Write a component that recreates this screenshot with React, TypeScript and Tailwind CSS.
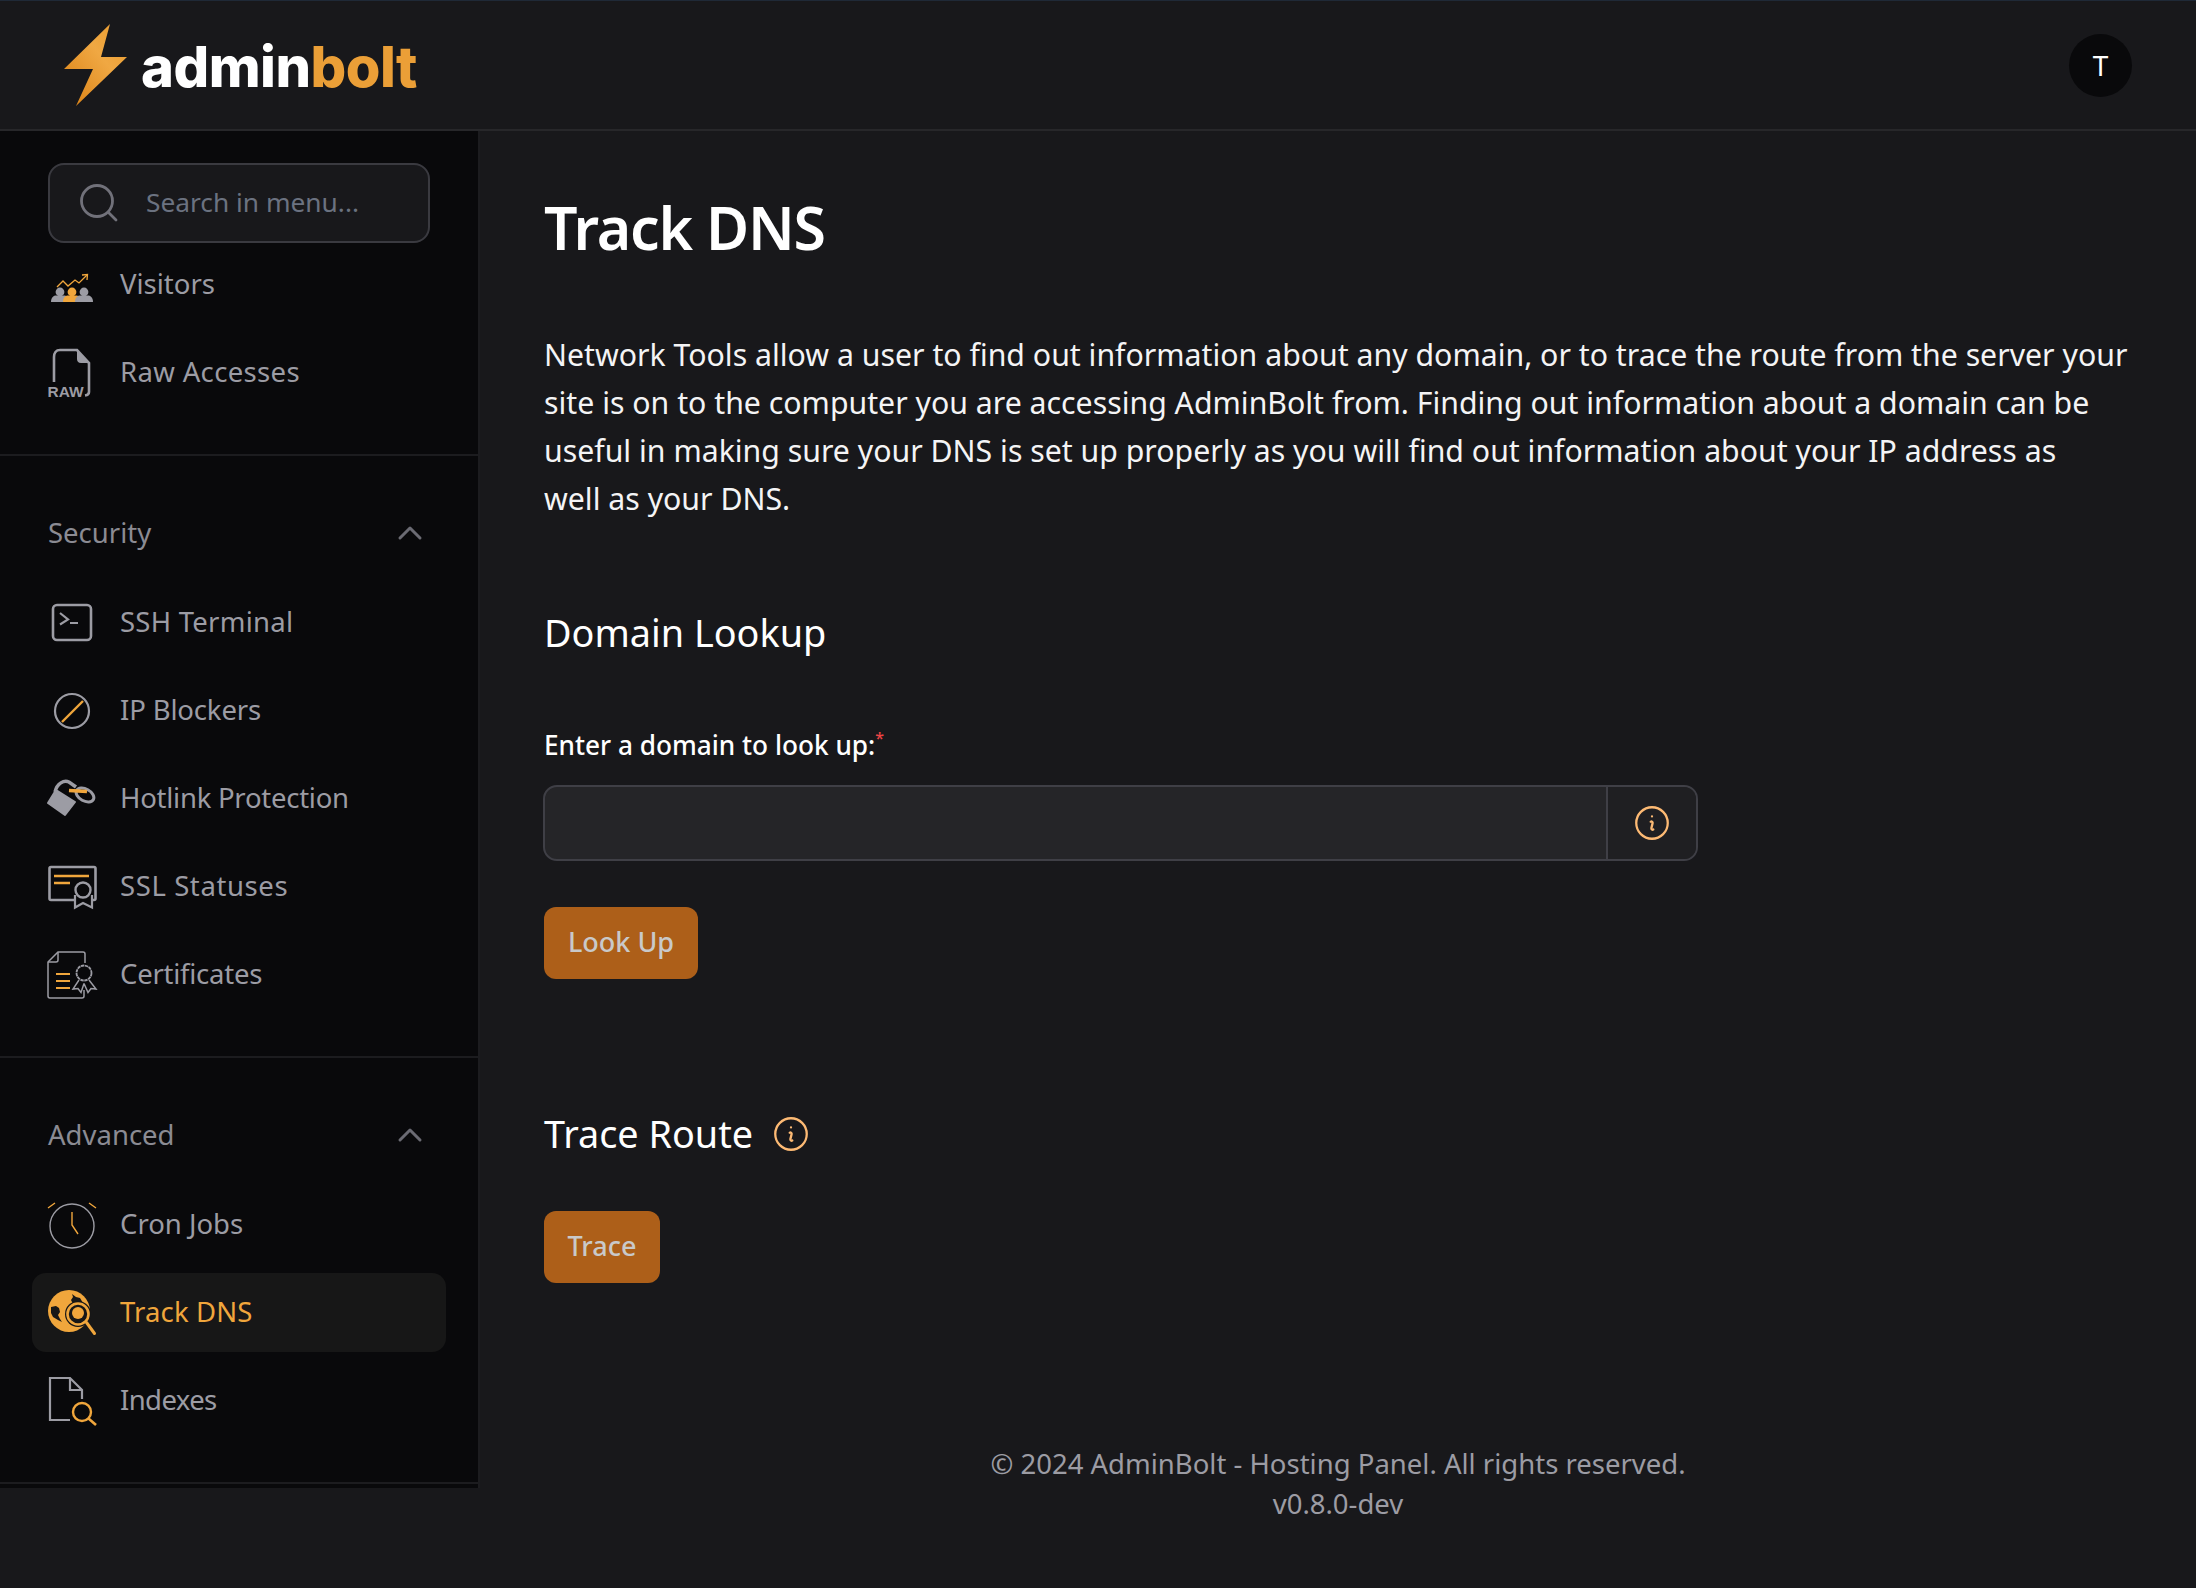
import React from "react";

const G = "#9c9ca4";
const O = "#f0a63c";

function Box({ children }: { children: React.ReactNode }) {
  return (
    <svg viewBox="0 0 48 48" className="w-12 h-12 shrink-0 overflow-visible mb-[3px]" fill="none">
      {children}
    </svg>
  );
}

const VisitorsIcon = () => (
  <Box>
    <polyline points="9,28 15,22 20,27 27,21 31,24 39,16" stroke={O} strokeWidth="1.3" />
    <polyline points="34,16 39.5,15.5 39,21" stroke={O} strokeWidth="1.3" />
    {[[12, G], [24, O], [36, G]].map(([x, c]) => (
      <g key={x as number} fill={c as string}>
        <circle cx={x as number} cy={33} r={4.4} />
        <path d={`M${(x as number) - 9} 43c0-5 3-6.500 5-6.500h8c2 0 5 1.500 5 6.500z`} />
      </g>
    ))}
  </Box>
);
const RawIcon = () => (
  <Box>
    <path d="M6 35V10c0-4 2-7 6-7h17l12 13v29c0 2-1 3-4 3.500" stroke={G} strokeWidth="2.6" />
    <path d="M29 3l12 13h-8c-3 0-4-2-4-4z" fill={G} />
    <text x="-0.500" y="50" fontFamily="Liberation Sans" fontWeight="700" fontSize="15.5" fill={G}>RAW</text>
  </Box>
);
const SshIcon = () => (
  <Box>
    <rect x="5" y="8" width="38" height="35" rx="4" stroke={G} strokeWidth="2.6" />
    <path d="M12 16l8 6.500-8 5M22 26h8" stroke={G} strokeWidth="2.2" />
  </Box>
);
const BlockIcon = () => (
  <Box>
    <circle cx="24" cy="26" r="17" stroke={G} strokeWidth="2.2" />
    <path d="M14 37L35 16" stroke={O} strokeWidth="2.4" />
  </Box>
);
const HotlinkIcon = () => (
  <Box>
    <path d="M0 30L8 17l19 12-10 13z" fill={G} strokeLinejoin="round" stroke={G} strokeWidth="2" />
    <path d="M7 19C9 10 16 7 21 9l7 5" stroke={G} strokeWidth="3.5" />
    <ellipse cx="37" cy="22" rx="9.500" ry="6" transform="rotate(28 37 22)" stroke={G} strokeWidth="3" />
    <path d="M21 17.500l18 1" stroke={O} strokeWidth="3.5" />
  </Box>
);
const SslIcon = () => (
  <Box>
    <rect x="1.500" y="6" width="46" height="33" rx="1.500" stroke={G} strokeWidth="2.6" />
    <path d="M6 15h35M6 22h16" stroke={O} strokeWidth="2.6" />
    <path d="M27 34v12.500l8-4.500 9 4.500V34" stroke={G} strokeWidth="2.2" fill="#09090b" />
    <circle cx="35" cy="29" r="7.500" stroke={G} strokeWidth="2.4" fill="#09090b" />
  </Box>
);
const CertIcon = () => (
  <Box>
    <path d="M37 14V5c0-1-1-2-2-2H10L0 13v34c0 1 1 2 2 2h32c1 0 2-1 2-2v-6" stroke={G} strokeWidth="1.5" />
    <path d="M0 13h8c1 0 2-1 2-2V3" stroke={G} strokeWidth="1.5" />
    <path d="M8 25h14M8 32h14M8 39h14" stroke={O} strokeWidth="2" />
    <path d="M31 31l-6 9 5-.500 3 4 3-9M41 31l7 9-5-.500-3 4-4-9" stroke={G} strokeWidth="1.5" fill="#09090b" />
    <circle cx="36" cy="24" r="7.500" stroke={G} strokeWidth="1.800" strokeDasharray="3.400 .6" fill="#09090b" />
  </Box>
);
const CronIcon = () => (
  <Box>
    <circle cx="24" cy="27" r="22" stroke={G} strokeWidth="1.400" />
    <path d="M24 13v13l6 9" stroke={O} strokeWidth="1.400" />
    <path d="M0 9l7-5M41 4l7 5" stroke={O} strokeWidth="1.400" />
  </Box>
);
const TrackIcon = () => (
  <Box>
    <circle cx="21" cy="24" r="21" fill={O} />
    <path d="M3 20c2 0 3-1 5-1l3 2 1 4-2 3 2 4 2 3-4-2-5-3-2-4z" fill="#171717" />
    <path d="M24 7l4 3 4 1 3 5 1 2-6-2-5 1-2-4 2-3z" fill="#171717" />
    <circle cx="30" cy="27" r="13" fill="#171717" />
    <circle cx="30" cy="27" r="10.500" stroke={O} strokeWidth="2.6" />
    <circle cx="30" cy="26" r="6" fill={O} />
    <path d="M38.500 35.500L46.500 46.500" stroke={O} strokeWidth="3" strokeLinecap="round" />
  </Box>
);
const IndexIcon = () => (
  <Box>
    <path d="M22 45H2V3h20l12 12v9M22 3v12h12" stroke={G} strokeWidth="2.2" />
    <circle cx="34" cy="37" r="9" stroke={O} strokeWidth="2.4" />
    <path d="M40.500 43.500L48 50" stroke={O} strokeWidth="2.6" />
  </Box>
);

function Row({ icon, label, active, last, fit = "" }: { icon: React.ReactNode; label: string; active?: boolean; last?: boolean; fit?: string }) {
  return (
    <div
      className={`h-[79px] flex items-center gap-6 px-4 rounded-[14px] ${last ? "" : "mb-[9px]"} ${active ? "bg-[#171717] text-[#f0a63c]" : "text-[#9c9ca4]"}`}
    >
      {icon}
      <span className={`text-[27.5px] leading-[40px] mb-[2px] ${fit}`}>{label}</span>
    </div>
  );
}

function SectionHead({ label }: { label: string }) {
  return (
    <div className="h-[79px] mb-[9px] flex items-center justify-between pl-4 pr-[22px] text-[#8b8b93]">
      <span className="text-[27.5px] leading-[40px] mb-[3px]">{label}</span>
      <svg width="28" height="28" viewBox="0 0 28 28" fill="none" className="mb-[3px]">
        <path d="M4 19L14 9l10 10" stroke="#6b6b73" strokeWidth="3" strokeLinecap="round" strokeLinejoin="round" />
      </svg>
    </div>
  );
}

function InfoIcon() {
  return (
    <svg width="42" height="42" viewBox="0 0 24 24" fill="none" stroke="#fdba74" strokeWidth="1.300" strokeLinecap="round" strokeLinejoin="round">
      <path d="M11.250 11.250l.041-.02a.75.75 0 011.063.852l-.708 2.836a.75.75 0 001.063.853l.041-.021M21 12a9 9 0 11-18 0 9 9 0 0118 0zm-9-3.750h.008v.008H12V8.250z" />
    </svg>
  );
}

export default function App() {
  return (
    <div className="h-[1588px] w-[2196px] overflow-hidden bg-[#18181b] text-white font-['Noto_Sans',sans-serif] flex flex-col border-t border-[#1f2937]">
      <header className="h-[130px] shrink-0 flex items-center justify-between border-b-2 border-[#27272a] pl-[64px] pr-[64px]">
        <div className="flex items-center gap-[14px]">
          <svg viewBox="0 0 63 82" className="w-[63px] h-[82px]">
            <defs>
              <linearGradient id="bolt" x1="0" y1="1" x2="1" y2="0">
                <stop offset="0" stopColor="#d97f12" />
                <stop offset="0.6" stopColor="#f0a843" />
                <stop offset="1" stopColor="#e89a2c" />
              </linearGradient>
            </defs>
            <polygon points="46,0 0,45 29,45 12,82 63,33 37,33" fill="url(#bolt)" />
          </svg>
          <span className="font-['Inter',sans-serif] font-extrabold text-[56px] leading-none tracking-[-0.5px] mt-[4px]">
            admin<span className="text-[#eb9f37]">bolt</span>
          </span>
        </div>
        <div className="w-[63px] h-[63px] rounded-full bg-[#09090b] flex items-center justify-center text-[28px]">T</div>
      </header>
      <div className="flex flex-1 min-h-0">
        <aside className="w-[480px] h-[1357px] shrink-0 bg-[#09090b] border-r-2 border-[#1c1c1f] overflow-hidden">
          <div className="px-[48px] pt-[32px] pb-[2px]">
            <div className="h-[80px] rounded-[16px] border-2 border-[#3a3a40] bg-[#18181b] flex items-center pl-[30px] gap-[28px]">
              <svg width="38" height="38" viewBox="0 0 38 38" fill="none" stroke="#71717a" strokeWidth="2.800" strokeLinecap="round">
                <circle cx="17" cy="17" r="15.500" />
                <path d="M29 29l7 7" />
              </svg>
              <span className="text-[26.3px] text-[#6b7280]">Search in menu...</span>
            </div>
          </div>
          <div className="px-[32px] pb-[42px] border-b-2 border-[#1c1c1f]">
            <Row icon={<VisitorsIcon />} label="Visitors" />
            <Row icon={<RawIcon />} label="Raw Accesses" last fit="tracking-[0.35px]" />
          </div>
          <div className="px-[32px] pt-[39px] pb-[42px] border-b-2 border-[#1c1c1f]">
            <SectionHead label="Security" />
            <Row icon={<SshIcon />} label="SSH Terminal" fit="tracking-[0.25px]" />
            <Row icon={<BlockIcon />} label="IP Blockers" fit="tracking-[-0.15px]" />
            <Row icon={<HotlinkIcon />} label="Hotlink Protection" fit="tracking-[-0.25px]" />
            <Row icon={<SslIcon />} label="SSL Statuses" fit="tracking-[0.6px]" />
            <Row icon={<CertIcon />} label="Certificates" last fit="tracking-[-0.25px]" />
          </div>
          <div className="px-[32px] pt-[39px] pb-[42px] border-b-2 border-[#1c1c1f]">
            <SectionHead label="Advanced" />
            <Row icon={<CronIcon />} label="Cron Jobs" />
            <Row icon={<TrackIcon />} label="Track DNS" active fit="tracking-[0.15px]" />
            <Row icon={<IndexIcon />} label="Indexes" last fit="tracking-[-0.6px]" />
          </div>
        </aside>
        <main className="flex-1 min-w-0 flex flex-col px-[64px]">
          <h1 className="mt-[56px] text-[59px] leading-[80px] font-semibold tracking-[-1.2px]">Track DNS</h1>
          <p className="mt-[64px] text-[30.250px] leading-[48px] text-[#f4f4f5]">
            Network Tools allow a user to find out information about any domain, or to trace the route from the server your site is on to the computer you are accessing AdminBolt from. Finding out information about a domain can be useful in making sure your DNS is set up properly as you will find out information about your IP address as<br />well as your DNS.
          </p>
          <h2 className="mt-[82px] text-[37.800px] leading-[56px]">Domain Lookup</h2>
          <label className="mt-[64px] text-[26.200px] leading-[40px] font-medium block">
            Enter a domain to look up:<sup className="text-[#ef4444] text-[16px] leading-none relative -top-[11px]">*</sup>
          </label>
          <div className="mt-[20px] -ml-px w-[1155px] h-[76px] rounded-[14px] border-2 border-[#3f3f46] bg-[#252528] flex">
            <div className="flex-1" />
            <div className="w-[90px] border-l-2 border-[#3f3f46] bg-[#1f1f22] rounded-r-[12px] flex items-center justify-center">
              <InfoIcon />
            </div>
          </div>
          <button className="mt-[46px] self-start h-[72px] w-[154px] rounded-[12px] bg-[#ad5f19] pb-[2px] text-[27px] font-medium text-[#c9c9c9]">Look Up</button>
          <div className="mt-[127px] flex items-center gap-[17px]">
            <h2 className="text-[37.800px] leading-[56px]">Trace Route</h2>
            <InfoIcon />
          </div>
          <button className="mt-[49px] self-start h-[72px] w-[116px] rounded-[12px] bg-[#ad5f19] pb-[2px] text-[27px] font-medium text-[#c9c9c9]">Trace</button>
          <footer className="mt-[161px] text-center text-[27.500px] leading-[40px] text-[#9c9ca4]">
            <div>© 2024 AdminBolt - Hosting Panel. All rights reserved.</div>
            <div>v0.8.0-dev</div>
          </footer>
        </main>
      </div>
    </div>
  );
}
